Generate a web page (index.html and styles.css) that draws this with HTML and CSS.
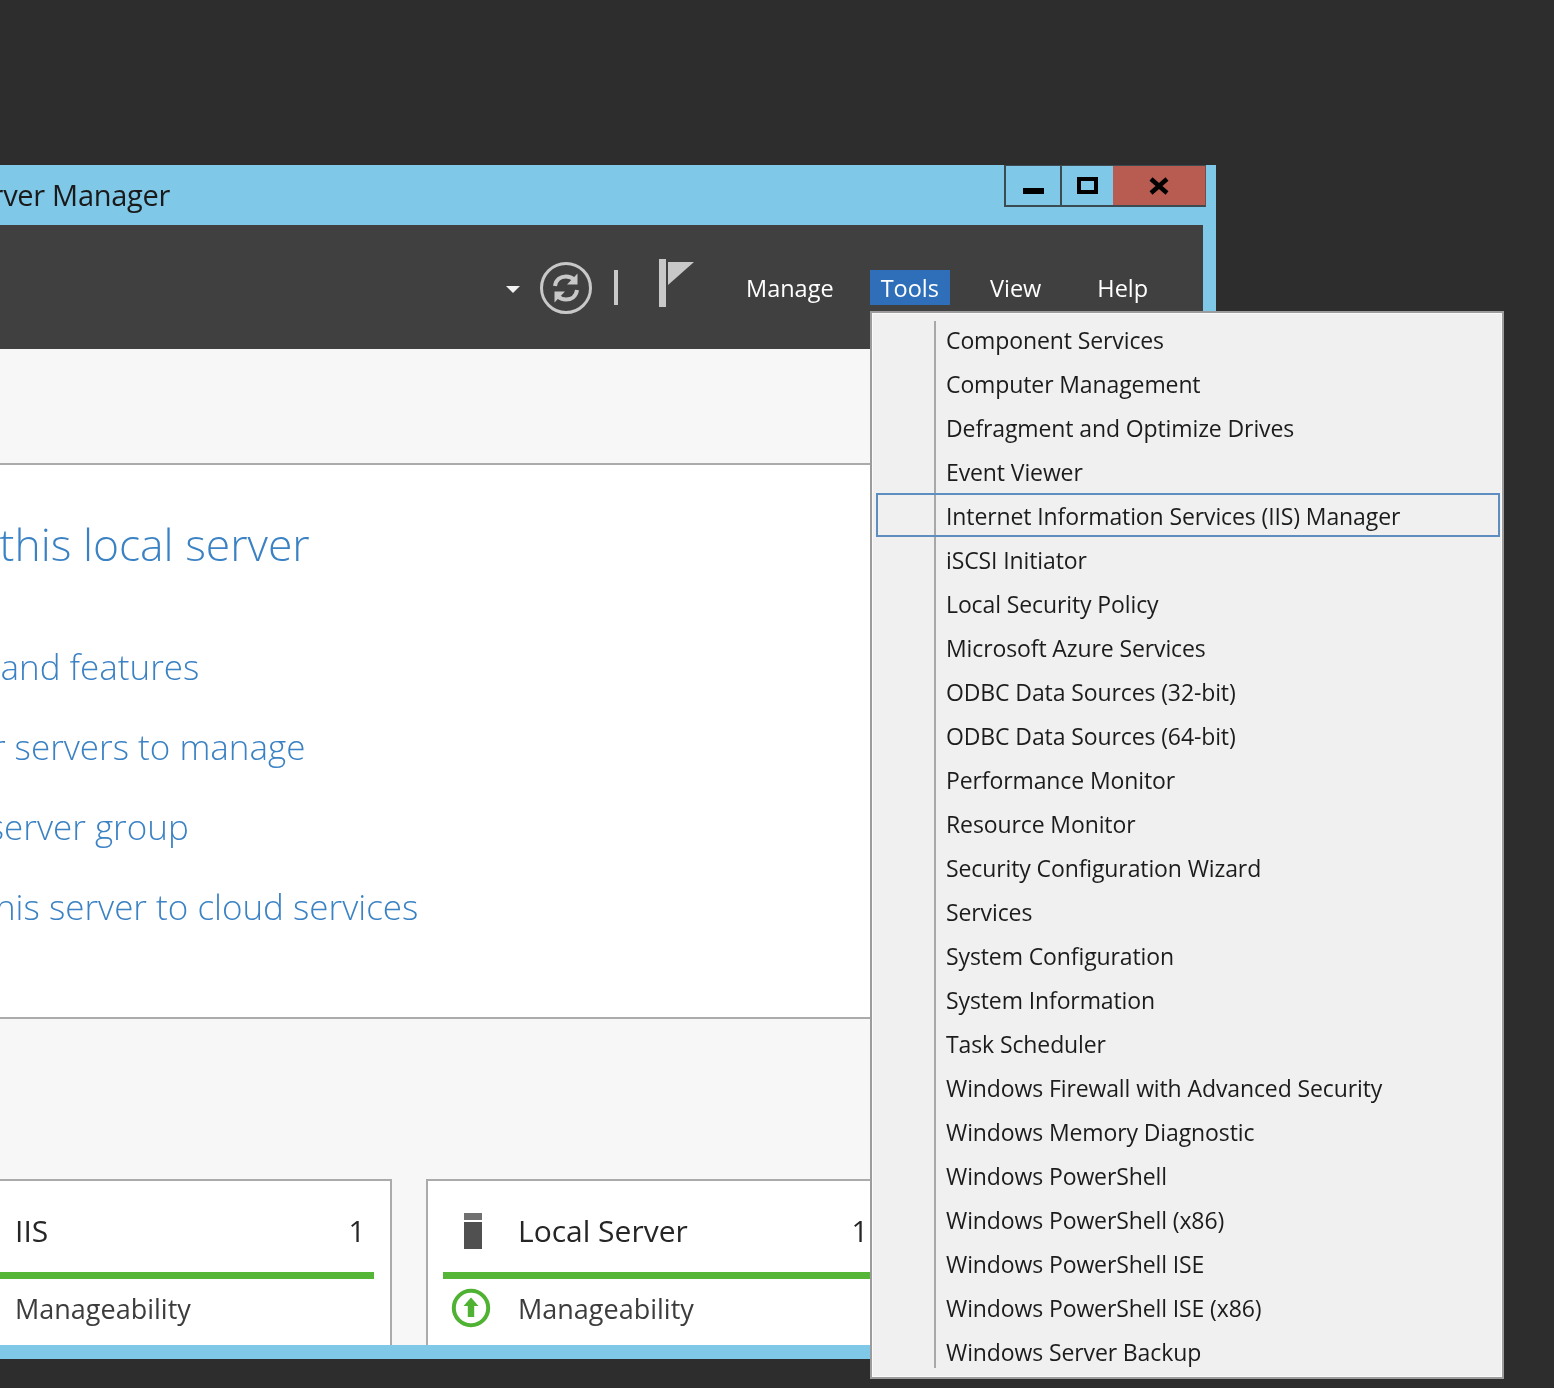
FILE: index.html
```html
<!DOCTYPE html>
<html lang="en">
<head>
<meta charset="utf-8">
<title>Server Manager</title>
<link rel="stylesheet" href="styles.css">
</head>
<body>
<div class="window">
  <div class="titlebar">
    <span class="title">Server Manager</span>
    <div class="controls">
      <div class="ctl ctl-min"><span class="min-glyph"></span></div>
      <div class="ctl ctl-max"><span class="max-glyph"></span></div>
      <div class="ctl ctl-close">
        <svg width="22" height="18" viewBox="0 0 22 18"><path d="M3 2 L19 16 M19 2 L3 16" stroke="#000" stroke-width="4.500" fill="none"/></svg>
      </div>
    </div>
  </div>
  <div class="client">
    <div class="toolbar">
      <svg class="caret" width="14" height="7" viewBox="0 0 14 7"><path d="M0 0H14L7 7Z" fill="#f2f2f2"/></svg>
      <svg class="refresh" width="54" height="54" viewBox="0 0 54 54">
        <circle cx="27" cy="27" r="24.500" fill="none" stroke="#c8c8c8" stroke-width="3"/>
        <path d="M16 25 C17 18 22 15.500 27 15.500 C31 15.500 33.500 17 35.500 19" fill="none" stroke="#c8c8c8" stroke-width="4"/>
        <path d="M38.500 12.500 V23.500 H28Z" fill="#c8c8c8"/>
        <path d="M38 29 C37 36 32 38.500 27 38.500 C23 38.500 20.500 37 18.500 35" fill="none" stroke="#c8c8c8" stroke-width="4"/>
        <path d="M15.500 41.500 V30.500 H26Z" fill="#c8c8c8"/>
      </svg>
      <span class="tb-sep"></span>
      <svg class="flag" width="36" height="50" viewBox="0 0 36 50"><path d="M1 0H8V48H1Z" fill="#c8c8c8"/><path d="M10 3H36L10 26Z" fill="#c8c8c8"/></svg>
      <nav class="menubar">
        <span class="mb-item mb-manage">Manage</span>
        <span class="mb-item mb-tools">Tools</span>
        <span class="mb-item mb-view">View</span>
        <span class="mb-item mb-help">Help</span>
      </nav>
    </div>
    <div class="band"></div>
    <div class="quick">
      <h1 class="q-title">Configure this local server</h1>
      <a class="q-link q-add">Add roles and features</a>
      <a class="q-link q-other">Add other servers to manage</a>
      <a class="q-link q-create">Create a server group</a>
      <a class="q-link q-connect">Connect this server to cloud services</a>
    </div>
    <div class="lower">
      <div class="card">
        <div class="card-head"><span class="card-name">IIS</span><span class="card-count">1</span></div>
        <div class="card-rule"></div>
        <div class="card-row"><span class="card-row-text">Manageability</span></div>
      </div>
      <div class="card">
        <div class="card-head">
          <span class="server-icon"><span class="server-top"></span><span class="server-bottom"></span></span>
          <span class="card-name">Local Server</span><span class="card-count">1</span>
        </div>
        <div class="card-rule"></div>
        <div class="card-row">
          <svg class="up-icon" width="40" height="40" viewBox="0 0 40 40"><circle cx="20" cy="20" r="17.200" fill="#fff" stroke="#4fb233" stroke-width="4"/><path d="M20 9.500 L27.500 18H23.200V29H16.800V18H12.500Z" fill="#4fb233"/></svg>
          <span class="card-row-text">Manageability</span>
        </div>
      </div>
    </div>
  </div>
</div>
<div class="menu">
  <div class="mi">Component Services</div>
  <div class="mi">Computer Management</div>
  <div class="mi">Defragment and Optimize Drives</div>
  <div class="mi">Event Viewer</div>
  <div class="mi mi-hover">Internet Information Services (IIS) Manager</div>
  <div class="mi">iSCSI Initiator</div>
  <div class="mi">Local Security Policy</div>
  <div class="mi">Microsoft Azure Services</div>
  <div class="mi">ODBC Data Sources (32-bit)</div>
  <div class="mi">ODBC Data Sources (64-bit)</div>
  <div class="mi">Performance Monitor</div>
  <div class="mi">Resource Monitor</div>
  <div class="mi">Security Configuration Wizard</div>
  <div class="mi">Services</div>
  <div class="mi">System Configuration</div>
  <div class="mi">System Information</div>
  <div class="mi">Task Scheduler</div>
  <div class="mi">Windows Firewall with Advanced Security</div>
  <div class="mi">Windows Memory Diagnostic</div>
  <div class="mi">Windows PowerShell</div>
  <div class="mi">Windows PowerShell (x86)</div>
  <div class="mi">Windows PowerShell ISE</div>
  <div class="mi">Windows PowerShell ISE (x86)</div>
  <div class="mi">Windows Server Backup</div>
</div>
</body>
</html>
```
FILE: styles.css
```css
* { box-sizing: border-box; }
html, body { margin: 0; height: 100%; }
body {
  width: 1554px;
  height: 1388px;
  position: relative;
  overflow: hidden;
  background: #2d2d2d;
  font-family: "Open Sans", "Noto Sans", sans-serif;
}
.window {
  position: absolute;
  left: -210px;
  top: 165px;
  width: 1426px;
  height: 1194px;
  background: #7fc8e8;
  display: flex;
  flex-direction: column;
  padding: 0 13px 14px 0;
  filter: blur(0.35px);
}
.titlebar {
  height: 60px;
  flex: none;
  display: flex;
  justify-content: space-between;
  align-items: flex-start;
  margin-right: -3px;
}
.title {
  font-size: 29px;
  line-height: 60px;
  color: #1a1a1a;
  margin-left: 170px;
  letter-spacing: -0.3px;
}
.controls { display: flex; height: 42px; }
.ctl {
  height: 42px;
  display: flex;
  align-items: center;
  justify-content: center;
  border-top: 1px solid #3c4a52;
  border-bottom: 2px solid #3c4a52;
  border-left: 2px solid #3c4a52;
}
.ctl-min { width: 56px; }
.ctl-max { width: 53px; }
.ctl-close { width: 93px; background: #b85c52; border-left: 0; border-right: 1px solid #7c4a44; }
.min-glyph { width: 21px; height: 6px; background: #000; margin-top: 10px; }
.max-glyph { width: 21px; height: 17px; border: 4px solid #000; }
.client { flex: 1; display: flex; flex-direction: column; min-height: 0; }
.toolbar {
  height: 124px;
  flex: none;
  background: #404040;
  display: flex;
  align-items: flex-start;
}
.caret { margin: 61px 0 0 716px; }
.refresh { margin: 36px 0 0 19px; }
.tb-sep { width: 4px; height: 35px; background: #c8c8c8; margin: 45px 0 0 21px; }
.flag { margin: 34px 0 0 40px; }
.menubar { display: flex; margin: 45px 0 0 52px; }
.mb-item {
  font-size: 23.5px;
  line-height: 37px;
  height: 35px;
  color: #fff;
}
.mb-tools { background: #2f6fb9; padding: 0 11px; margin-left: 36px; }
.mb-view { margin-left: 40px; }
.mb-help { margin-left: 56px; }
.band {
  height: 116px;
  flex: none;
  background: #f7f7f7;
  border-bottom: 2px solid #ababab;
}
.quick {
  height: 554px;
  flex: none;
  background: #fff;
  border-bottom: 2px solid #ababab;
  display: flex;
  flex-direction: column;
}
.q-title {
  margin: 49px 0 0 4px;
  font-weight: 300;
  font-size: 44.4px;
  line-height: 60px;
  color: #3b82c4;
}
.q-link {
  font-size: 35px;
  line-height: 50px;
  font-weight: 300;
  color: #3b82c4;
  white-space: nowrap;
}
.q-add { margin: 68px 0 0 52px; }
.q-other { margin: 30px 0 0 58px; }
.q-create { margin: 30px 0 0 57px; }
.q-connect { margin: 30px 0 0 53px; }
.lower {
  flex: 1;
  min-height: 0;
  background: #f7f7f7;
  display: flex;
  align-items: flex-end;
  gap: 34px;
  padding-left: 133px;
}
.card {
  width: 469px;
  height: 166px;
  flex: none;
  background: #fff;
  border: 2px solid #ababab;
  border-bottom: 0;
  padding: 0 16px 0 15px;
  display: flex;
  flex-direction: column;
  position: relative;
}
.card-head {
  height: 91px;
  flex: none;
  display: flex;
  align-items: center;
  justify-content: space-between;
  padding: 8px 9px 0 75px;
  position: relative;
  color: #262626;
}
.card-name { font-size: 30px; flex: 1; }
.card-count { font-size: 29px; }
.card-rule { height: 7px; flex: none; background: #54b537; }
.card-row {
  flex: 1;
  display: flex;
  align-items: center;
  padding: 0 0 8px 75px;
  position: relative;
}
.card-row-text { font-size: 27px; color: #3c3c3c; }
.server-icon {
  position: absolute;
  left: 21px;
  top: 32px;
  width: 18px;
  height: 36px;
  display: flex;
  flex-direction: column;
  gap: 2px;
}
.server-top { height: 7px; background: #707070; }
.server-bottom { flex: 1; background: #505050; }
.up-icon { position: absolute; left: 8px; top: 9px; }
.menu {
  position: absolute;
  left: 870px;
  top: 311px;
  width: 634px;
  height: 1068px;
  background: #f0f0f0;
  border: 2px solid #9c9c9c;
  box-shadow: inset 0 0 0 1px #fafafa;
  padding: 4px 2px 4px 4px;
  font-size: 23px;
  color: #1c1c1c;
  filter: blur(0.35px);
}
.menu::before {
  content: "";
  position: absolute;
  left: 62px;
  top: 8px;
  bottom: 9px;
  width: 2px;
  background: #a8a8a8;
}
.mi {
  height: 44px;
  line-height: 44px;
  padding: 2px 0 0 68px;
  border: 2px solid transparent;
  display: flex;
  align-items: center;
  white-space: nowrap;
  letter-spacing: -0.11px;
  position: relative;
}
.mi-hover { border-color: #5e8ec0; }
```
